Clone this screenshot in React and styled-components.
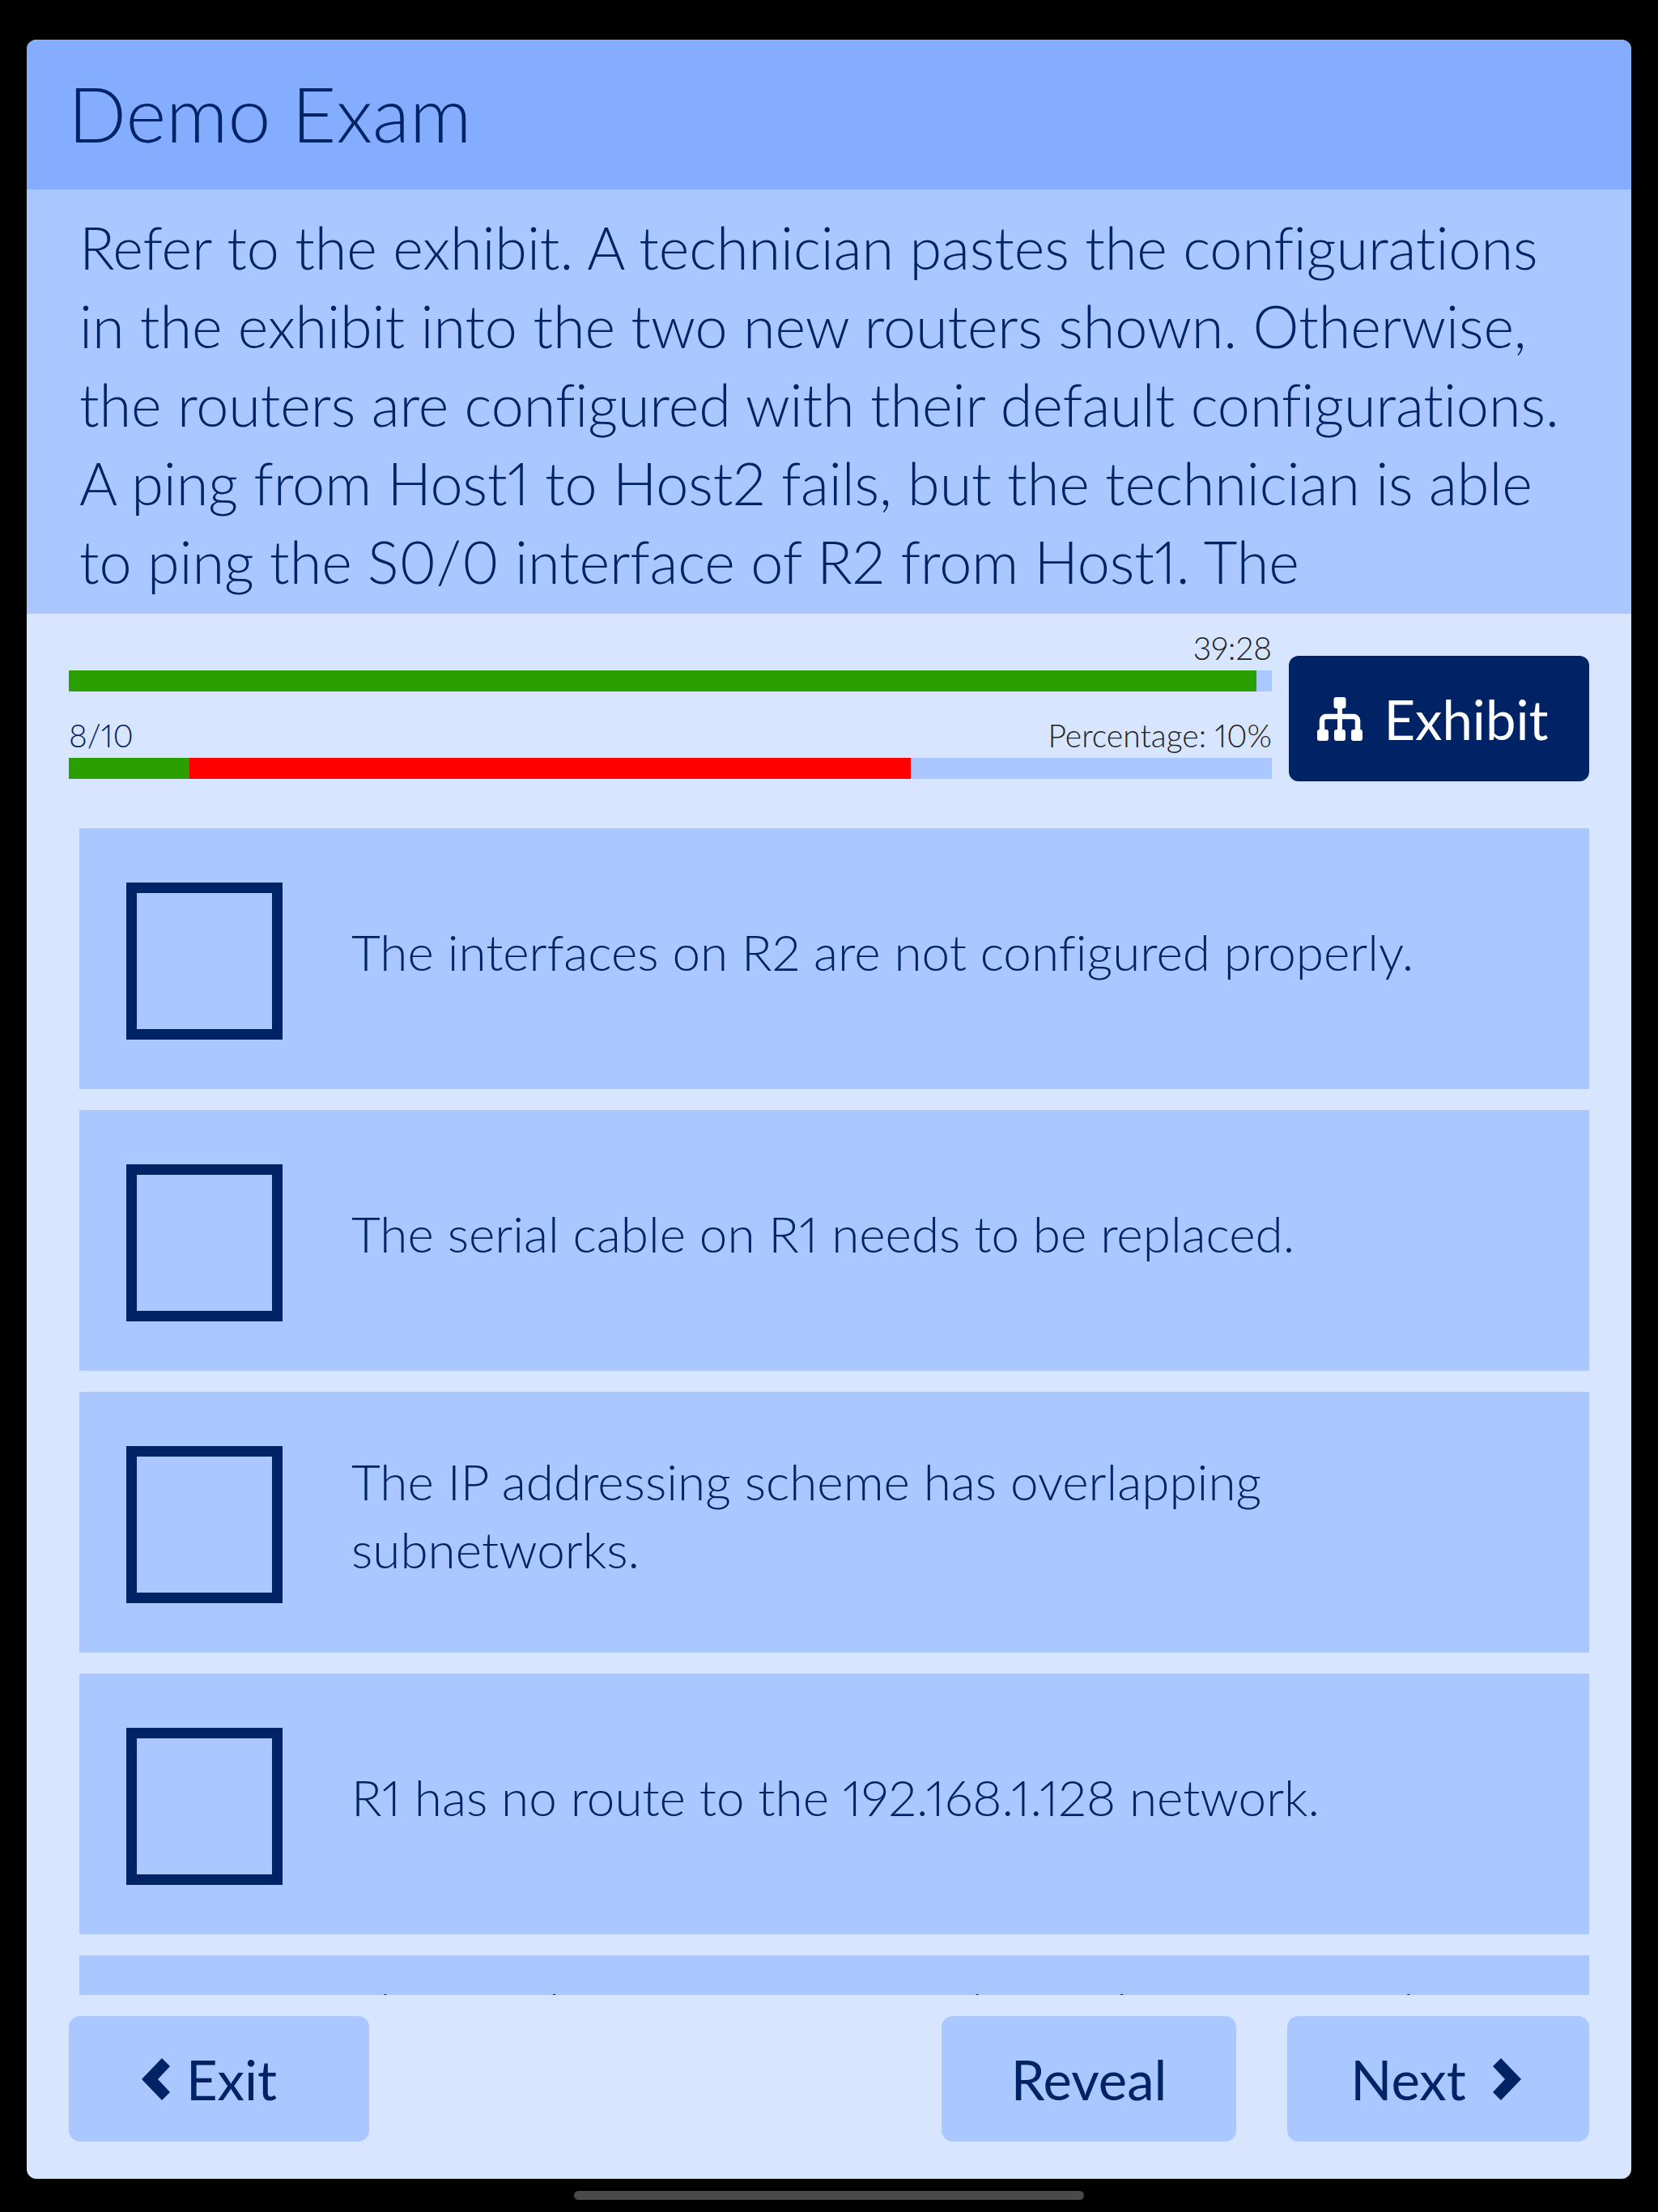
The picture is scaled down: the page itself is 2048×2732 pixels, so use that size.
import React from "react";
import styled, { createGlobalStyle } from "styled-components";

const navy = "#002366";
const light = "#aac7ff";
const pale = "#d8e5ff";

const GlobalStyle = createGlobalStyle`
  html, body {
    margin: 0;
    padding: 0;
    background: #000;
  }
  * {
    box-sizing: border-box;
  }
`;

const Screen = styled.div`
  position: relative;
  width: 2048px;
  height: 2732px;
  padding: 49px 33px 41px;
  background: #000;
  font-family: "Lato", "Liberation Sans", sans-serif;
  font-variant-ligatures: none;
  font-variant-numeric: proportional-nums;
  color: ${navy};
`;

const Card = styled.main`
  display: flex;
  flex-direction: column;
  height: 100%;
  border-radius: 12px;
  overflow: hidden;
  background: ${pale};
`;

const Header = styled.header`
  display: flex;
  align-items: center;
  flex: none;
  height: 185px;
  padding: 0 0 4px 51px;
  background: #84adff;
`;

const Title = styled.h1`
  margin: 0;
  font-size: 95px;
  font-weight: 300;
  line-height: 1;
`;

const Question = styled.section`
  flex: none;
  height: 524px;
  padding: 23px 75px 0 65px;
  overflow: hidden;
  background: ${light};
  font-size: 72px;
  font-weight: 300;
  line-height: 97px;
  letter-spacing: -0.1px;
`;

const StatusRow = styled.section`
  display: flex;
  flex: none;
  align-items: flex-start;
  gap: 21px;
  padding: 24px 52px 0;
`;

const Bars = styled.div`
  flex: 1;
`;

const BarLabel = styled.div`
  display: flex;
  justify-content: space-between;
  align-items: center;
  height: 46px;
  padding-bottom: 10px;
  font-size: 39px;
  font-weight: 300;
  color: #222;
`;

const Count = styled.span`
  color: ${navy};
`;

const Bar = styled.div`
  display: flex;
  height: 26px;
  background: ${light};
  &:not(:last-child) {
    margin-bottom: 36px;
  }
`;

const Fill = styled.div`
  width: ${(p) => p.$width}%;
  background: ${(p) => p.$color};
`;

const ExhibitButton = styled.button`
  display: flex;
  align-items: center;
  justify-content: center;
  gap: 26px;
  flex: none;
  width: 371px;
  height: 155px;
  margin-top: 28px;
  padding: 0 15px 0 0;
  border: 0;
  border-radius: 12px;
  background: ${navy};
  color: #fff;
  font: 400 67px "Lato", sans-serif;
  font-variant-ligatures: none;
`;

const AnswerList = styled.ul`
  display: flex;
  flex-direction: column;
  flex: none;
  gap: 26px;
  height: 1441px;
  margin: 58px 52px 0 65px;
  padding: 0;
  overflow: hidden;
  list-style: none;
`;

const Answer = styled.li`
  display: flex;
  flex: none;
  align-items: center;
  gap: 85px;
  height: 322px;
  padding: 0 160px 0 58px;
  background: ${light};
  font-size: 62px;
  font-weight: 300;
  line-height: 84px;
`;

const Checkbox = styled.span`
  flex: none;
  width: 193px;
  height: 194px;
  margin-top: 5px;
  border: 13px solid ${navy};
`;

const AnswerText = styled.span`
  padding-bottom: 18px;
`;

const Footer = styled.footer`
  display: flex;
  flex: none;
  gap: 63px;
  margin-top: 26px;
  padding: 0 52px;
`;

const NavButton = styled.button`
  display: flex;
  align-items: center;
  justify-content: center;
  gap: ${(p) => p.$gap || 0}px;
  width: ${(p) => p.$width}px;
  height: 155px;
  margin-right: ${(p) => (p.$pushRight ? "auto" : 0)};
  padding: 0 ${(p) => p.$endPad || 0}px 0 0;
  border: 0;
  border-radius: 14px;
  background: ${light};
  color: ${navy};
  font: 400 67px "Lato", sans-serif;
  font-variant-ligatures: none;
`;

const HomeIndicator = styled.div`
  position: absolute;
  left: 709px;
  bottom: 15px;
  width: 630px;
  height: 11px;
  border-radius: 6px;
  background: #4a4a4a;
`;

const Chevron = ({ flip }) => (
  <svg
    width="35"
    height="52"
    viewBox="0 0 35 52"
    fill={navy}
    style={flip ? { transform: "scaleX(-1)" } : undefined}
  >
    <polygon points="0,26 25,0 35,10 20,26 35,42 25,52" />
  </svg>
);

const SitemapIcon = () => (
  <svg width="56" height="54" viewBox="0 0 56 54" fill="#fff">
    <rect x="20.5" y="0" width="15" height="14" rx="3" />
    <rect x="25" y="12" width="6" height="30" />
    <path
      d="M6 42V29a5 5 0 0 1 5-5h34a5 5 0 0 1 5 5v13"
      fill="none"
      stroke="#fff"
      strokeWidth="6.5"
    />
    <rect x="0" y="40" width="14" height="14" rx="3" />
    <rect x="21" y="40" width="14" height="14" rx="3" />
    <rect x="42" y="40" width="14" height="14" rx="3" />
  </svg>
);

const answers = [
  "The interfaces on R2 are not configured properly.",
  "The serial cable on R1 needs to be replaced.",
  "The IP addressing scheme has overlapping subnetworks.",
  "R1 has no route to the 192.168.1.128 network.",
  "The ip subnet-zero command must be configured on both routers for these subnets to be usable on the serial link.",
];

export default function App() {
  return (
    <Screen>
      <GlobalStyle />
      <Card>
        <Header>
          <Title>Demo Exam</Title>
        </Header>
        <Question>
          Refer to the exhibit. A technician pastes the configurations in the
          exhibit into the two new routers shown. Otherwise, the routers are
          configured with their default configurations. A ping from Host1 to
          Host2 fails, but the technician is able to ping the S0/0 interface of
          R2 from Host1. The
        </Question>
        <StatusRow>
          <Bars>
            <BarLabel>
              <span />
              <span>39:28</span>
            </BarLabel>
            <Bar>
              <Fill $width={98.7} $color="#2b9e00" />
            </Bar>
            <BarLabel>
              <Count>8/10</Count>
              <span>Percentage: 10%</span>
            </BarLabel>
            <Bar>
              <Fill $width={10} $color="#2b9e00" />
              <Fill $width={60} $color="#ff0000" />
            </Bar>
          </Bars>
          <ExhibitButton>
            <SitemapIcon />
            Exhibit
          </ExhibitButton>
        </StatusRow>
        <AnswerList>
          {answers.map((text) => (
            <Answer key={text}>
              <Checkbox />
              <AnswerText>{text}</AnswerText>
            </Answer>
          ))}
        </AnswerList>
        <Footer>
          <NavButton $width={371} $gap={20} $endPad={24} $pushRight>
            <Chevron />
            Exit
          </NavButton>
          <NavButton $width={364}>Reveal</NavButton>
          <NavButton $width={373} $gap={33} $endPad={6}>
            Next
            <Chevron flip />
          </NavButton>
        </Footer>
      </Card>
      <HomeIndicator />
    </Screen>
  );
}
